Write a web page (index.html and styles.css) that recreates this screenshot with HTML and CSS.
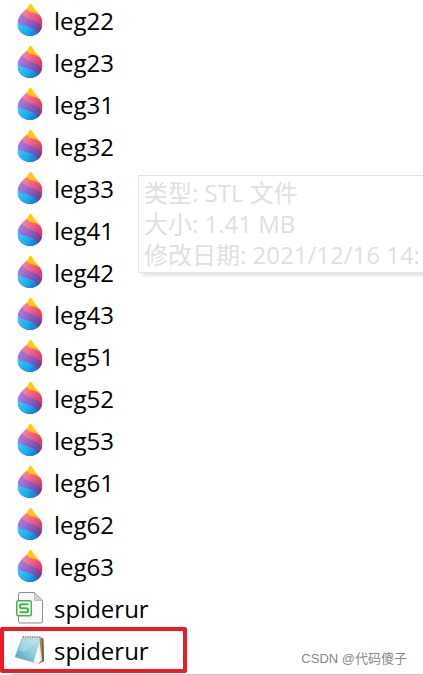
FILE: index.html
```html
<!DOCTYPE html>
<html lang="zh-CN">
<head>
    <meta charset="UTF-8">
    <meta name="viewport" content="width=device-width, initial-scale=1.0">
    <title>spiderur</title>
    <link rel="stylesheet" href="styles.css">
</head>
<body>
    <svg class="sprites" aria-hidden="true">
        <defs>
            <linearGradient id="pink" gradientUnits="userSpaceOnUse" x1="6" y1="6" x2="25" y2="19">
                <stop offset="0" stop-color="#f58a9c"/>
                <stop offset="1" stop-color="#e0306c"/>
            </linearGradient>
            <linearGradient id="purple" gradientUnits="userSpaceOnUse" x1="2" y1="12" x2="23" y2="27">
                <stop offset="0" stop-color="#ae7ce0"/>
                <stop offset="0.5" stop-color="#8f5cc4"/>
                <stop offset="1" stop-color="#5f4494"/>
            </linearGradient>
            <linearGradient id="blue" gradientUnits="userSpaceOnUse" x1="1" y1="19" x2="19" y2="32">
                <stop offset="0" stop-color="#35ccfa"/>
                <stop offset="0.5" stop-color="#20aeee"/>
                <stop offset="1" stop-color="#0874d4"/>
            </linearGradient>
            <linearGradient id="pad" x1="1" y1="0" x2="0" y2="1">
                <stop offset="0" stop-color="#c4e6ee"/>
                <stop offset="0.5" stop-color="#8ecbda"/>
                <stop offset="1" stop-color="#3d9fb8"/>
            </linearGradient>
            <clipPath id="drop-shape">
                <path d="M13 0C15 0 15 3 18 6C22 10 25 14 25 20C25 27 19 32 12.500 32C5.500 32 0 27 0 20C0 14 4 9 9 5C12 2 11 0 13 0Z"/>
            </clipPath>
        </defs>
        <symbol id="drop" viewBox="0 0 25 32">
            <g clip-path="url(#drop-shape)">
                <path fill="#fcca08" d="M0 0H25V32H0Z"/>
                <path fill="url(#pink)" d="M0 4H9C10 8 14 8 18 9L25 13V28H0Z"/>
                <path fill="url(#purple)" d="M0 10L5 9C6 14 12 15 17 17Q23 19 24 24L25 32H0Z"/>
                <path fill="url(#blue)" d="M0 17C2 21 6 21 12 23Q19 25 21 32H0Z"/>
            </g>
        </symbol>
        <symbol id="sheet" viewBox="0 0 28 32">
            <path fill="#fafafa" stroke="#8d8d8d" d="M4 0.500H18.500L26.500 8.500V29.500Q26.500 31 25 31H4Q2.500 31 2.500 29.500V2Q2.500 0.500 4 0.500Z"/>
            <path fill="#d2d2d2" stroke="#aaa" stroke-width="0.700" d="M18.500 0.500V8.500H26.500Z"/>
            <rect x="0.800" y="8.800" width="14.500" height="15" rx="1.500" fill="#fff" stroke="#45b549" stroke-width="1.500"/>
            <path fill="none" stroke="#45b549" stroke-width="2" d="M12.500 12.300H5.500Q4 12.300 4 13.800V14.800Q4 16.300 5.500 16.300H10.500Q12 16.300 12 17.800V18.800Q12 20.300 10.500 20.300H3.500"/>
        </symbol>
        <symbol id="notepad" viewBox="0 0 32 30">
            <path fill="#a98b50" d="M26 2L29 3L30 26L25 29Z"/>
            <path fill="#776039" d="M28 3L29.500 4L30 26L28 27Z"/>
            <path fill="#d9e4e7" d="M25 3L28 25L24 29L18 28Z"/>
            <path fill="#f7fafa" d="M25 4L26 26L23 28L20 26Z"/>
            <path fill="url(#pad)" stroke="#7ab4c2" stroke-width="0.500" d="M8 3L26 4L19 27L1 22Z"/>
            <path fill="#c7e8ef" opacity="0.400" d="M9 4L25 5L10 17L5 15Z"/>
            <path fill="#d9dedf" d="M8 1H27L26 4L8 3Z"/>
            <path fill="none" stroke="#777" stroke-width="1.500" stroke-dasharray="1 1.300" d="M9 1.800L27 2.500"/>
        </symbol>
    </svg>

    <main class="explorer">
        <ul class="files">
            <li class="file"><svg class="icon"><use href="#drop"/></svg><span>leg22</span></li>
            <li class="file"><svg class="icon"><use href="#drop"/></svg><span>leg23</span></li>
            <li class="file"><svg class="icon"><use href="#drop"/></svg><span>leg31</span></li>
            <li class="file"><svg class="icon"><use href="#drop"/></svg><span>leg32</span></li>
            <li class="file">
                <svg class="icon"><use href="#drop"/></svg><span>leg33</span>
                <div class="tooltip" role="tooltip">
                    <p>类型: STL 文件</p>
                    <p>大小: 1.41 MB</p>
                    <p>修改日期: 2021/12/16 14:</p>
                </div>
            </li>
            <li class="file"><svg class="icon"><use href="#drop"/></svg><span>leg41</span></li>
            <li class="file"><svg class="icon"><use href="#drop"/></svg><span>leg42</span></li>
            <li class="file"><svg class="icon"><use href="#drop"/></svg><span>leg43</span></li>
            <li class="file"><svg class="icon"><use href="#drop"/></svg><span>leg51</span></li>
            <li class="file"><svg class="icon"><use href="#drop"/></svg><span>leg52</span></li>
            <li class="file"><svg class="icon"><use href="#drop"/></svg><span>leg53</span></li>
            <li class="file"><svg class="icon"><use href="#drop"/></svg><span>leg61</span></li>
            <li class="file"><svg class="icon"><use href="#drop"/></svg><span>leg62</span></li>
            <li class="file"><svg class="icon"><use href="#drop"/></svg><span>leg63</span></li>
            <li class="file"><svg class="icon"><use href="#sheet"/></svg><span>spiderur</span></li>
            <li class="file marked"><svg class="icon"><use href="#notepad"/></svg><span>spiderur</span></li>
        </ul>
        <p class="watermark">CSDN @代码傻子</p>
    </main>
</body>
</html>
```
FILE: styles.css
```css
body {
    margin: 0;
    background: #fff;
    color: #000;
    font-family: "Open Sans", "Noto Sans CJK SC", sans-serif;
    font-size: 24px;
}

p {
    margin: 0;
}

.sprites {
    position: absolute;
    width: 0;
    height: 0;
}

.explorer {
    position: relative;
    overflow: hidden;
    padding-bottom: 4px;
}

/* bottom edge of the file pane */
.explorer::after {
    content: "";
    position: absolute;
    left: 12px;
    right: 0;
    bottom: 0;
    height: 1px;
    background: #c8c8c8;
}

/* the list is scrolled a little under the top edge */
.files {
    list-style: none;
    margin: -1px 0 0;
    padding: 0;
}

.file {
    position: relative;
    display: flex;
    align-items: center;
    gap: 8px;
    height: 42px;
    padding-left: 14px;
}

.icon {
    width: 32px;
    height: 32px;
}

/* red frame around the file */
.marked::after {
    content: "";
    position: absolute;
    left: 0;
    top: -2px;
    bottom: -2px;
    width: 187px;
    box-sizing: border-box;
    border: 4px solid #ed1c24;
    border-radius: 2px;
}

.tooltip {
    position: absolute;
    left: 138px;
    top: 8px;
    right: -4px;
    z-index: 1;
    padding: 1px 5px 2px;
    border: 1px solid #e4e4e4;
    background: #fff;
    box-shadow: 4px 4px 3px -1px #e4e4e4;
    color: #e0e0e0;
    line-height: 31px;
    white-space: nowrap;
}

.watermark {
    position: absolute;
    right: 16px;
    bottom: 6px;
    color: #888;
    font-family: "Liberation Sans", "Noto Sans CJK SC", sans-serif;
    font-size: 13px;
    line-height: 20px;
}
```
